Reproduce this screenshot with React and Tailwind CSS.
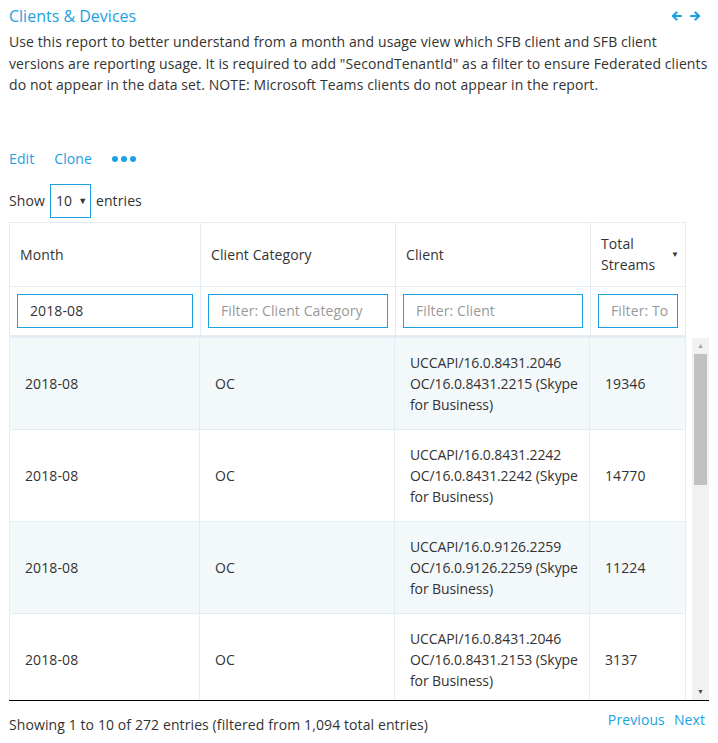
import React from "react";

const ROWS = [
  { month: "2018-08", cat: "OC", client: "UCCAPI/16.0.8431.2046 OC/16.0.8431.2215 (Skype for Business)", total: "19346" },
  { month: "2018-08", cat: "OC", client: "UCCAPI/16.0.8431.2242 OC/16.0.8431.2242 (Skype for Business)", total: "14770" },
  { month: "2018-08", cat: "OC", client: "UCCAPI/16.0.9126.2259 OC/16.0.9126.2259 (Skype for Business)", total: "11224" },
  { month: "2018-08", cat: "OC", client: "UCCAPI/16.0.8431.2046 OC/16.0.8431.2153 (Skype for Business)", total: "3137" },
];

function Arrow({ dir }) {
  return (
    <svg width="11" height="10" viewBox="0 0 11 10" fill="none" stroke="#1ba1e2" strokeWidth="2.2" strokeLinecap="round" strokeLinejoin="round">
      {dir === "left" ? (
        <>
          <path d="M10 5H2" />
          <path d="M5.5 1.5L2 5l3.5 3.5" />
        </>
      ) : (
        <>
          <path d="M1 5h8" />
          <path d="M5.5 1.5L9 5 5.5 8.5" />
        </>
      )}
    </svg>
  );
}

export default function App() {
  return (
    <div className="w-[718px] h-[743px] bg-white text-[#333] text-[14px] tracking-[0.1px] overflow-hidden" style={{ fontFamily: '"Open Sans", sans-serif' }}>
      <div className="px-[9px]">
        <div className="flex items-center justify-between h-[32px]">
          <h1 className="text-[16px] text-[#1ba1e2] leading-none tracking-normal">Clients &amp; Devices</h1>
          <div className="flex items-center gap-[8px] pr-[8px]">
            <Arrow dir="left" />
            <Arrow dir="right" />
          </div>
        </div>
        <p className="leading-[21.5px] -mt-[1px]">
          Use this report to better understand from a month and usage view which SFB client and SFB client versions are reporting usage. It is required to add "SecondTenantId" as a filter to ensure Federated clients do not appear in the data set. NOTE: Microsoft Teams clients do not appear in the report.
        </p>

        <div className="flex items-center mt-[52px] h-[22px] text-[#1ba1e2]">
          <span>Edit</span>
          <span className="ml-[20px]">Clone</span>
          <span className="flex items-center gap-[3px] ml-[20px]">
            <span className="w-[6px] h-[6px] rounded-full bg-[#1ba1e2]" />
            <span className="w-[6px] h-[6px] rounded-full bg-[#1ba1e2]" />
            <span className="w-[6px] h-[6px] rounded-full bg-[#1ba1e2]" />
          </span>
        </div>

        <div className="flex items-center mt-[14px] h-[34px]">
          <span>Show</span>
          <div className="mx-[5px] w-[41px] h-[34px] border border-[#1ba1e2] flex items-center pl-[5px] gap-[6px]">
            <span>10</span>
            <span className="text-[9px]">▼</span>
          </div>
          <span>entries</span>
        </div>

        <div className="mt-[4px] w-[700px]">
          <div className="w-[677px] border border-[#e4edf3]">
            <div className="grid grid-cols-[191px_195px_195px_1fr] h-[64px] border-b border-[#e4edf3]">
              <div className="flex items-center pl-[10px] border-r border-[#e4edf3]">Month</div>
              <div className="flex items-center pl-[10px] border-r border-[#e4edf3]">Client Category</div>
              <div className="flex items-center pl-[10px] border-r border-[#e4edf3]">Client</div>
              <div className="flex items-center pl-[10px] pr-[6px] justify-between">
                <span className="leading-[21px]">Total<br />Streams</span>
                <span className="text-[8px]">▼</span>
              </div>
            </div>
            <div className="grid grid-cols-[191px_195px_195px_1fr] h-[50px] border-b-2 border-[#e4edf3]">
              {["2018-08", "Filter: Client Category", "Filter: Client", "Filter: To"].map((t, i) => (
                <div key={i} className={`flex items-center px-[7px] ${i < 3 ? "border-r border-[#e4edf3]" : ""}`}>
                  <div className={`w-full h-[34px] border border-[#1ba1e2] flex items-center pl-[12px] overflow-hidden whitespace-nowrap ${i === 0 ? "text-[#333]" : "text-[#999]"}`}>
                    {t}
                  </div>
                </div>
              ))}
            </div>
          </div>

          <div className="flex h-[363px] border-b border-black overflow-hidden">
            <div className="w-[677px] border-x border-[#e4edf3] overflow-hidden">
              {ROWS.map((r, i) => (
                <div key={i} className={`grid grid-cols-[190px_195px_195px_1fr] h-[92px] border-b border-[#e4edf3] ${i % 2 === 0 ? "bg-[#f3f8fb]" : "bg-white"}`}>
                  <div className="flex items-center pl-[15px] border-r border-[#e4edf3]">{r.month}</div>
                  <div className="flex items-center pl-[15px] border-r border-[#e4edf3]">{r.cat}</div>
                  <div className="flex items-center pl-[15px] pr-[1px] border-r border-[#e4edf3] leading-[21px] tracking-[-0.1px]">{r.client}</div>
                  <div className="flex items-center pl-[15px]">{r.total}</div>
                </div>
              ))}
            </div>
            <div className="ml-[6px] w-[17px] bg-[#f1f1f1] flex flex-col items-center">
              <span className="text-[7px] text-[#a3a3a3] h-[16px] leading-[16px]">▲</span>
              <div className="w-[13px] h-[131px] bg-[#c1c1c1]" />
              <div className="flex-1" />
              <span className="text-[7px] text-[#505050] h-[16px] leading-[16px]">▼</span>
            </div>
          </div>
        </div>

        <div className="flex items-center justify-between h-[46px] pt-[2px] w-[700px]">
          <span>Showing 1 to 10 of 272 entries (filtered from 1,094 total entries)</span>
          <div className="flex gap-[9px] text-[#1ba1e2] pr-[4px] -mt-[10px]">
            <span>Previous</span>
            <span>Next</span>
          </div>
        </div>
      </div>
    </div>
  );
}
